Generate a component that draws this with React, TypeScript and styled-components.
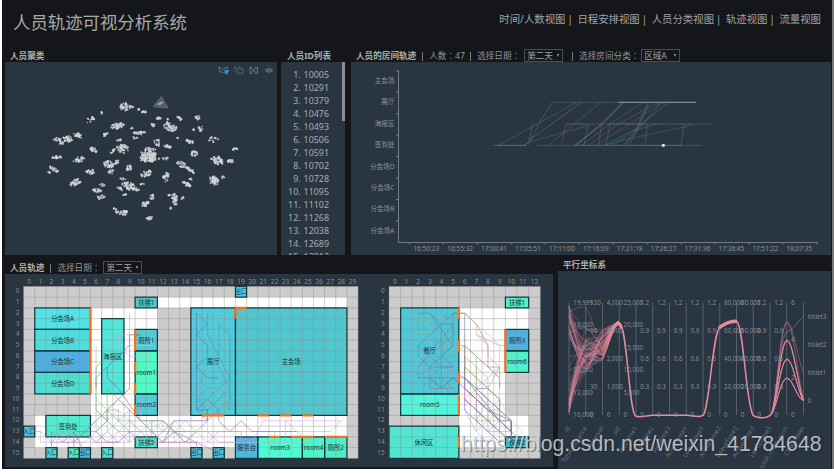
import React from "react";
import styled, { createGlobalStyle } from "styled-components";

const GlobalStyle = createGlobalStyle`
  html, body { margin: 0; padding: 0; background: #fff; overflow: hidden; }
  * { box-sizing: border-box; }
  body, svg text { font-family: "Noto Sans", "Noto Sans CJK SC", sans-serif; }
`;

const Page = styled.div`
  position: relative;
  width: 834px;
  height: 469px;
  padding-left: 2px;
  display: flex;
  background: #fff;
`;
const Shell = styled.main`
  width: 830px;
  height: 469px;
  background: #14161a;
  display: flex;
  flex-direction: column;
  overflow: hidden;
`;
const PageScroll = styled.div`
  width: 2px;
  background: #77797b;
`;
const Header = styled.header`
  height: 48px;
  display: flex;
  justify-content: space-between;
  align-items: flex-start;
  padding: 0 11px 0 11px;
`;
const Title = styled.h1`
  margin: 9px 0 0;
  font-size: 17.4px;
  line-height: 26px;
  font-weight: 400;
  color: #a8a9aa;
  white-space: nowrap;
`;
const Nav = styled.nav`
  margin-top: 12px;
  display: flex;
  font-size: 10.4px;
  line-height: 15px;
  color: #a2a3a4;
  white-space: nowrap;
`;
const NavItem = styled.a`
  & + & { margin-left: 4.4px; }
  &:not(:last-child)::after { content: "|"; margin-left: 1.8px; }
`;
const Row = styled.div<{ $gap: number; $h: number }>`
  display: flex;
  gap: ${(p) => p.$gap}px;
  height: ${(p) => p.$h}px;
  padding-left: 3px;
  flex: none;
`;
const Section = styled.section<{ $w: number; $ml?: number }>`
  width: ${(p) => p.$w}px;
  margin-left: ${(p) => p.$ml ?? 0}px;
  display: flex;
  flex-direction: column;
  flex-shrink: 0;
`;
const Head = styled.div<{ $h: number; $pad?: number }>`
  height: ${(p) => p.$h}px;
  padding-left: ${(p) => p.$pad ?? 5}px;
  display: flex;
  align-items: flex-end;
  flex: none;
  font-size: 8.6px;
  line-height: 12px;
  color: #939495;
  white-space: nowrap;
`;
const Footing = styled.div`
  height: 2px;
  flex: none;
`;
const HeadTitle = styled.strong`
  font-weight: 700;
  color: #aeafb0;
`;
const Bar = styled.span<{ $l: number; $r: number }>`
  width: 1px;
  height: 9px;
  margin: 0 ${(p) => p.$r}px 1px ${(p) => p.$l}px;
  background: #77797b;
`;
const Field = styled.span<{ $w: number }>`
  width: ${(p) => p.$w}px;
`;
const Colon = styled.span`
  font-family: "Noto Sans CJK TC", sans-serif;
`;
const SelectBox = styled.span`
  width: 39px;
  height: 13px;
  border: 1px solid #4a4c50;
  padding: 0 3px 0 2px;
  display: flex;
  align-items: center;
  justify-content: space-between;
  color: #a0a1a2;
  position: relative;
  z-index: 1;
`;
const Caret = styled.i`
  border: 1.5px solid transparent;
  border-top: 3px solid #a8a9aa;
  border-bottom: 0;
`;
const Panel = styled.div`
  flex: 1;
  min-height: 0;
  background: #293541;
  overflow: hidden;
  display: flex;
`;
const Chart = styled.svg`
  display: block;
  flex: none;
`;
const IdList = styled.ol`
  margin: 0;
  padding: 5.5px 0 0;
  width: 48px;
  list-style: none;
  font-size: 8.9px;
  line-height: 13.06px;
  color: #a9acaf;
`;
const IdItem = styled.li`
  display: flex;
  justify-content: flex-end;
  gap: 3px;
  white-space: nowrap;
`;
const Thumb = styled.div`
  width: 3px;
  height: 59px;
  margin-left: auto;
  background: #8b8d8f;
`;
const Watermark = styled.svg`
  position: absolute;
  left: 455px;
  top: 422px;
  pointer-events: none;
  text {
    font-family: "Liberation Sans", sans-serif;
    font-size: 21.5px;
  }
`;

function rng(seed: number) {
  let s = seed;
  return () => {
    s = (s * 1664525 + 1013904223) % 4294967296;
    return s / 4294967296;
  };
}

// Cluster centre, radii, rotation (degrees) and number of dots, in thirds of a pixel.
const clusters: number[][] = [
  [375, 320, 15, 12, 0, 30], [392, 321, 8, 3, 0, 6], [416, 328, 4, 2, 0, 3], [432, 335, 10, 3, 0, 9], [304, 338, 4, 3, 0, 3], [271, 360, 14, 8, -25, 16],
  [352, 378, 21, 9, -12, 38], [397, 385, 4, 3, 0, 3], [478, 355, 9, 5, 0, 10], [503, 358, 4, 3, 0, 3], [537, 355, 9, 5, 20, 9], [592, 353, 8, 6, 20, 9], [461, 376, 8, 4, 30, 7],
  [510, 380, 20, 13, 20, 48], [602, 386, 8, 8, 60, 9], [580, 389, 5, 2, 0, 3], [419, 399, 19, 4, 0, 20], [404, 413, 9, 2, 0, 4], [315, 404, 12, 4, -42, 11],
  [236, 406, 17, 8, 20, 19], [195, 420, 24, 12, -12, 42], [170, 418, 12, 7, 0, 7], [533, 415, 3, 2, 0, 2], [569, 424, 12, 7, 10, 15], [640, 418, 17, 8, 5, 10],
  [281, 449, 13, 6, 20, 17], [355, 422, 10, 4, -15, 6], [368, 446, 18, 13, 10, 35], [340, 453, 12, 4, -30, 7], [472, 428, 14, 10, 40, 14], [502, 439, 12, 4, 10, 14],
  [444, 464, 28, 20, -35, 85], [448, 474, 26, 12, 0, 38], [490, 475, 16, 4, 0, 7], [582, 460, 11, 8, 0, 17], [704, 447, 11, 4, 0, 10],
  [171, 472, 15, 4, 0, 16], [236, 479, 17, 7, -15, 22], [325, 493, 17, 11, 10, 36], [348, 487, 11, 4, -30, 8], [386, 503, 9, 8, 0, 19],
  [543, 493, 14, 9, 25, 20], [569, 510, 16, 6, 28, 20], [652, 481, 19, 12, 15, 42], [692, 484, 15, 4, 0, 12], [162, 508, 18, 5, 28, 16], [147, 520, 4, 4, 0, 3],
  [271, 515, 14, 7, 0, 20], [333, 516, 9, 6, -40, 7], [439, 521, 17, 8, -20, 24], [498, 531, 9, 15, 20, 24], [642, 542, 15, 12, 30, 40], [670, 532, 5, 3, 0, 4],
  [226, 547, 17, 10, -20, 32], [369, 537, 9, 3, 0, 5], [388, 558, 23, 11, 15, 48], [414, 571, 6, 3, 0, 5], [360, 565, 8, 4, 40, 6], [376, 584, 9, 2, 0, 5], [426, 552, 6, 2, 0, 4], [557, 551, 17, 5, 24, 24], [573, 537, 4, 3, 0, 3],
  [293, 573, 15, 6, 20, 18], [307, 555, 8, 4, 0, 5], [304, 591, 13, 6, -15, 12], [525, 598, 8, 18, -15, 34], [547, 594, 5, 4, 0, 4], [507, 584, 4, 3, 0, 3],
  [436, 612, 13, 7, -20, 22], [456, 591, 8, 6, -50, 9], [512, 624, 5, 2, 0, 4], [363, 637, 19, 7, 12, 20], [346, 626, 6, 3, 0, 4], [376, 635, 9, 3, 0, 8], [449, 655, 9, 4, -8, 11],
];

const dots = (() => {
  const r = rng(7);
  return clusters.flatMap(([cx, cy, rx, ry, a, n]) =>
    Array.from({ length: Math.ceil(n * 1.15) }, () => {
      const t = r() * Math.PI * 2;
      const d = Math.sqrt(r());
      const k = (a * Math.PI) / 180;
      const x = Math.cos(t) * rx * d;
      const y = Math.sin(t) * ry * d;
      return [cx + x * Math.cos(k) - y * Math.sin(k), cy + x * Math.sin(k) + y * Math.cos(k), 2.2 + r() * 1.4];
    })
  );
})();

const Scatter = () => (
  <Chart width={272} height={193} viewBox="5 62 272 193">
    <g transform="scale(.33333)" fill="#d4d6d8">
      {dots.map(([x, y, s], i) => (
        <circle key={i} cx={x} cy={y} r={s} fillOpacity={0.8} />
      ))}
      <path d="M484 289L505 324L459 320Z" fill="#4b6071" stroke="#5b7483" strokeWidth={2} />
      <path d="M472 313l8-5 10-2-5 5-9 3Z" stroke="#d98bb5" fill="#d98bb5" strokeWidth={2} />
      <g fill="none" stroke="#3a8fb8" strokeWidth={3}>
        <path d="M657 201l10 7 15-7-2 17M657 201l2 14 20 5" strokeDasharray="7 2" />
        <path d="M673 211l8 12 1-7 5-3Z" fill="#3a8fb8" />
        <path d="M757 202h-7v18h7M765 202h7v18h-7M755 206l12 11M767 206l-12 11" />
      </g>
      <g fill="none" stroke="#5a656f" strokeWidth={3}>
        <path d="M704 208v-7h6M715 201h7M704 213v4M711 206h18v14h-18z" />
        <path d="M795 211q12-12 24 0q-12 12-24 0Z" fill="#555d65" />
        <circle cx={807} cy={211} r={2.5} fill="#293541" />
      </g>
    </g>
  </Chart>
);

const ids = ["10005", "10291", "10379", "10476", "10493", "10506", "10591", "10702", "10728", "11095", "11102", "11268", "12038", "12689", "12812"];
const rooms = ["主会场", "展厅", "海报区", "签到处", "分会场D", "分会场C", "分会场B", "分会场A"];
const times = ["16:50:23", "16:55:32", "17:00:41", "17:05:51", "17:11:00", "17:16:09", "17:21:18", "17:26:27", "17:31:36", "17:36:45", "17:51:22", "18:07:35"];

const trackLines: [string, string, number][] = [
  ["M55 181L290 52M55 181L130 181", "#4f8090", 0.7],
  ["M145 181L182 106L217 52H420", "#4f8090", 0.75],
  ["M130 181Q145 176 148 165L158 117M148 165L305 52", "#77858c", 0.75],
  ["M135 180L152 170L325 121", "#65727a", 0.7],
  ["M205 181L362 52", "#507f88", 0.75],
  ["M245 181L258 117H320", "#86606c", 0.8],
  ["M285 181L370 115L432 52", "#8c8f92", 0.9],
  ["M290 181L385 96L428 52", "#75818a", 0.8],
  ["M312 181L325 117M355 181L365 117M378 181L390 117", "#7d8b93", 0.6],
  ["M305 181L390 117L490 52", "#68808a", 0.6],
  ["M325 181L415 117L535 52M345 181L450 117L545 52", "#835f6b", 0.75],
  ["M375 181L470 130L565 52M430 181L465 140L505 52", "#578693", 0.8],
  ["M435 181L545 52M448 181L480 117L505 60", "#668087", 0.7],
  ["M375 181L430 165L655 117H698", "#63717b", 0.75],
  ["M400 178L468 135L530 117M603 181L612 117M495 181L502 117", "#568490", 0.7],
  ["M40 181H140", "#6c8d98", 0.9],
  ["M168 181H290", "#7e5b68", 0.9],
  ["M285 181H500", "#6e9a97", 0.9],
  ["M500 181H605", "#6b9dae", 1],
  ["M605 181H665", "#647078", 0.9],
  ["M258 117H500", "#746b74", 0.7],
  ["M385 117H640", "#6b8c96", 0.8],
];

const RoomChart = () => (
  <Chart width={480} height={193} viewBox="351 62 480 193">
    <path
      d={`M398.5 70.5V242.5H817.5 ${rooms.map((_, i) => `M396 ${70.8 + i * 21.45}h2.5`).join("")} ${[...times, ""].map((_, i) => `M${409.4 + i * 33.97} 242v2.5`).join("")}`}
      fill="none" stroke="#727b84"
    />
    <g fill="#8b9299" fontSize={6.6}>
      {rooms.map((t, i) => (
        <text key={t} x={394.5} y={83 + i * 21.4} textAnchor="end">{t}</text>
      ))}
      {times.map((t, i) => (
        <text key={t} x={426.3 + i * 33.9} y={251} textAnchor="middle" fontSize={6.5}>{t}</text>
      ))}
    </g>
    <g transform="translate(480 85) scale(.33333)" fill="none" strokeWidth={2.4}>
      {trackLines.map(([d, c, o], i) => (
        <path key={i} d={d} stroke={c} strokeOpacity={o * 0.72} />
      ))}
      <path d="M415 52H648" stroke="#7b8a8d" strokeWidth={4} />
      <circle cx={550} cy={181} r={5} fill="#c5f2e8" />
    </g>
  </Chart>
);

type Room = [string, number, number, number, number, string];
interface MapSpec {
  x: number; cell: number; cols: number; rooms: Room[]; white: number[][]; doors: number[][];
}
const CELL_H = 10.75;
const MAP_Y = 286.4;

const floorOne: MapSpec = {
  x: 23.6, cell: 11.15, cols: 30,
  white: [[12, 1, 17, 1], [6, 2, 6, 2], [6, 4, 4, 8], [1, 12, 28, 2], [1, 14, 18, 1]],
  rooms: [
    ["分会场A", 1, 2, 5, 2, "#50e2e6"], ["分会场B", 1, 4, 5, 2, "#50dcdc"], ["分会场C", 1, 6, 5, 2, "#50aede"], ["分会场D", 1, 8, 5, 2, "#50dcd0"],
    ["海报区", 7, 3, 2, 7, "#50e6d8"], ["扶梯1", 10, 1, 2, 1, "#50c8cc"], ["厕所1", 10, 4, 2, 2, "#50ccd8"], ["room1", 10, 6, 2, 4, "#50fac4"], ["room2", 10, 10, 2, 2, "#50ccd8"],
    ["签到处", 2, 12, 4, 2, "#50ebd0"], ["入口", 0, 13, 1, 1, "#50bcd8"], ["扶梯2", 10, 14, 2, 1, "#50e6c8"],
    ["入口", 2, 15, 1, 1, "#50d4dc"], ["入口", 4, 15, 1, 1, "#50ebc4"], ["出口", 5, 15, 1, 1, "#50b8d8"], ["入口", 7, 15, 1, 1, "#50e2cc"],
    ["展厅", 15, 2, 4, 10, "#50ccdc"], ["主会场", 19, 2, 10, 10, "#50c6ce"], ["出口", 19, 0, 1, 1, "#50c8dc"],
    ["出口", 15, 15, 1, 1, "#50bcdc"], ["出口", 17, 15, 1, 1, "#50c4dc"],
    ["服务台", 19, 14, 2, 2, "#50b8e0"], ["room3", 21, 14, 4, 2, "#50fad6"], ["room4", 25, 14, 2, 2, "#50f0c8"], ["厕所2", 27, 14, 2, 2, "#50ebc8"],
  ],
  doors: [
    [6, 2, 6, 10], [10, 4, 10, 6], [10, 7, 10, 8], [10, 9, 10, 10], [10, 11, 10, 12], [19, 2, 20, 2], [19, 2, 19, 3],
    [16, 12, 18, 12], [21, 12, 22, 12], [23, 12, 24, 12], [25, 12, 26, 12], [22, 14, 23, 14], [24, 14, 26, 14], [27, 14, 29, 14],
  ],
};
const floorTwo: MapSpec = {
  x: 389, cell: 11.64, cols: 13,
  white: [[6, 2, 6, 2], [6, 4, 4, 11], [10, 12, 2, 3]],
  rooms: [
    ["餐厅", 1, 2, 5, 8, "#50c8d8"], ["room5", 1, 10, 5, 2, "#50f5dc"], ["休闲区", 0, 13, 6, 3, "#50e6d2"], ["扶梯1", 10, 1, 2, 1, "#50f0c8"],
    ["厕所3", 10, 4, 2, 2, "#50b0de"], ["room6", 10, 6, 2, 2, "#50f0c8"], ["扶梯2", 10, 14, 2, 1, "#3fb8cc"],
  ],
  doors: [[6, 2, 6, 3], [6, 5, 6, 6], [6, 8, 6, 9], [6, 10, 6, 12], [6, 14, 6, 15], [10, 4, 10, 8]],
};

// Walks through cell centres; each entry is a colour followed by column,row pairs.
const walksOne: [string, string][] = [
  ["#c77be0", "0,13 1,13 2,14 3,13 4,14 5,13 6,14 8,14 9,13 10,14 12,14 13,13 14,14 15,13 16,12 16,11"],
  ["#6a5ab8", "6,9 6,8 7,7 9,5 9,4"], ["#6a5ab8", "7,7 7,8 8,9 10,12 11,13 12,14 13,12 16,12 16,11 15,11 15,2"],
  ["#555560", "4,14 5,13 6,12 8,10 9,9 9,4 10,4"], ["#555560", "8,10 10,12 12,12 13,13 15,13"],
  ["#e49ae8", "9,2 9,4 8,4 8,5 9,6 11,6"], ["#e49ae8", "9,4 9,9 10,10 10,12 12,14 20,14 21,12 28,12 27,13 22,13"],
  ["#8fbf8f", "6,5 6,13 7,14 8,13 9,14"], ["#8fbf8f", "7,11 7,13 8,12 10,12 11,13 12,12 14,14 15,13 16,13"],
  ["#9fb8e4", "1,13 1,14 5,14 6,13 7,12 8,11 10,13"], ["#9fb8e4", "4,14 7,11 8,12 9,13 8,14 7,13 6,14"],
  ["#a5688a", "2,15 2,13 3,14 4,13 5,15"], ["#a5688a", "4,15 4,13 6,13 7,14 8,14"], ["#a5688a", "15,15 15,14 11,14 11,12"],
  ["#80a470", "7,6 6,7 6,11 8,13 10,13 11,14 13,12"], ["#80a470", "8,10 7,9 7,12 6,13"], ["#bba6cc", "12,14 13,13 14,12 15,13 14,14 13,13 12,12"],
  ["#bba6cc", "5,13 6,14 7,13 8,14 9,13 10,14 11,13 12,14 13,13 14,14"], ["#9a7ac0", "10,13 13,13 15,14 17,15"], ["#84b890", "16,14 17,13 22,13 22,14 21,14"],
  ["#896a7e", "17,11 17,12 18,13 19,12 20,13 24,13"], ["#9bd0a0", "23,14 23,12 24,13 25,14 20,14"],
  ["#5a7aa0", "15,2 16,3 15,4 16,5 16,6 15,7 16,8 17,8"], ["#50b890", "16,4 18,6 18,10 17,11 16,10 15,10"], ["#5a90a8", "17,3 18,4 18,11"],
  ["#9a9b78", "15,6 16,7 15,9 17,11 18,10 17,9 16,9"], ["#9a9b78", "15,10 17,8 15,8 18,11"], ["#9070b0", "15,11 16,12 17,11 16,10 15,11"],
  ["#4d9ba0", "16,2 16,4 18,8 15,11"], ["#718f9c", "15,10 16,11 18,9 17,7 17,3"], ["#b49cd8", "16,13 17,14 19,14 19,13 14,13"], ["#d9b0d0", "8,5 11,5 11,4"],
  ["#a8c4a0", "6,13 7,12 8,13 9,12 10,13 11,12 12,13 13,12 14,13"], ["#7fa87c", "6,11 7,12 7,11 8,11 8,12 9,11 9,14"], ["#c49ad0", "2,13 4,13 4,14 3,14 3,13 2,14 9,14 10,13"],
  ["#a9b8a0", "6,10 7,11 9,13 12,13 12,12 13,13 13,14 14,13 18,13"], ["#b8c8e4", "16,12 16,14 15,13 14,14"],
];
const walksTwo: [string, string][] = [
  ["#94a860", "2,2 2,4 3,4 5,6 6,5 9,8"], ["#b49470", "2,2 4,4 5,5 6,5 9,8 9,9"], ["#6c78a8", "2,2 3,2 4,3 5,2 6,2 6,8"],
  ["#776a9c", "2,8 5,8 6,8 7,9 8,9 9,10 9,12"], ["#64528c", "3,8 4,9 5,8 6,9 8,11 10,12 10,13"], ["#6c78a8", "2,5 4,7 5,7 4,6 5,5 5,3 4,3 4,9"],
  ["#6c78a8", "3,2 5,5 3,7 2,6 2,5 4,3"], ["#a87090", "2,7 5,4 5,2 6,2 7,3 8,5 8,7 9,7 9,9"], ["#dc96b4", "6,2 7,3 7,4 8,5 8,6 9,7 6,10"],
  ["#a8cca4", "6,2 9,5 9,13 7,11"], ["#648c60", "6,6 6,8 9,11 10,12 10,14"], ["#648c60", "6,5 6,9 7,10 10,13"], ["#648c60", "6,7 9,10 9,12 11,14"],
  ["#5d7060", "6,8 6,9 10,13"], ["#56506c", "6,8 9,12 10,12 10,14 6,10"], ["#c88cd0", "6,9 6,11 8,13 9,14"], ["#c88cd0", "8,9 8,13 10,13 9,12 8,13 7,12 7,10"],
  ["#9468b8", "6,10 10,14 10,12 7,9"], ["#9cc48c", "7,7 7,13 8,12 9,11 8,10 7,12 9,14"], ["#a4b4e0", "6,11 7,13 8,14 9,13 9,11"],
  ["#c49c9c", "7,4 9,5 10,5"], ["#cf9a8c", "9,7 8,9 6,7 6,4"], ["#a87090", "2,8 3,7 5,9 3,9 3,7 5,7"], ["#7c84b4", "4,2 5,3 2,7 2,8"],
  ["#b8dab0", "9,10 10,12 11,13 10,14 9,13"], ["#b278ce", "3,9 3,8 4,7 6,8 6,11 9,14"], ["#78a0b0", "3,3 5,3 4,5 3,6 5,6 5,8"],
  ["#c884c8", "6,10 8,12 8,11 9,10 9,11 8,11 8,10 7,9 7,11 9,13"], ["#8cb47c", "6,6 8,8 8,9 9,10 9,14"], ["#8cb47c", "7,6 7,9 9,11 9,12 7,12"],
];

function FloorMap({ spec, walks }: { spec: MapSpec; walks: [string, string][] }) {
  const { x, cell, cols } = spec;
  const px = (c: number) => x + c * cell;
  const py = (r: number) => MAP_Y + r * CELL_H;
  const right = px(cols);
  const bottom = py(16);
  const grid = [
    ...Array.from({ length: cols + 1 }, (_, i) => `M${px(i)} ${MAP_Y}V${bottom}`),
    ...Array.from({ length: 17 }, (_, i) => `M${x} ${py(i)}H${right}`),
  ].join("");
  return (
    <g>
      <rect x={x} y={MAP_Y} width={right - x} height={bottom - MAP_Y} fill="#cccccc" />
      {spec.white.map(([c, r, w, h], i) => (
        <rect key={i} x={px(c)} y={py(r)} width={w * cell} height={h * CELL_H} fill="#fff" />
      ))}
      {spec.rooms.map(([, c, r, w, h, f], i) => (
        <rect key={i} x={px(c)} y={py(r)} width={w * cell} height={h * CELL_H} fill={f} />
      ))}
      <path d={grid} stroke="#8c8c8c" strokeOpacity={0.55} strokeWidth={0.75} fill="none" />
      {spec.rooms.map(([, c, r, w, h], i) => (
        <rect key={i} x={px(c)} y={py(r)} width={w * cell} height={h * CELL_H} fill="none" stroke="#12383c" strokeWidth={1.2} />
      ))}
      {walks.map(([color, pts], i) => (
        <polyline
          key={i}
          points={pts.split(" ").map((p) => { const [c, r] = p.split(",").map(Number); return `${px(c + 0.5)},${py(r + 0.5)}`; }).join(" ")}
          fill="none" stroke={color} strokeWidth={0.75} strokeOpacity={0.75}
        />
      ))}
      {spec.doors.map(([a, b, c, d], i) => (
        <path key={i} d={`M${px(a)} ${py(b)}L${px(c)} ${py(d)}`} stroke="#f8701c" strokeWidth={2.2} />
      ))}
      <g fill="#17363c" fontSize={6.3} textAnchor="middle">
        {spec.rooms.map(([t, c, r, w, h], i) => (
          <text key={i} x={px(c + w / 2)} y={py(r + h / 2) + 2.4}>{t}</text>
        ))}
      </g>
      <g fill="#888f95" fontSize={6.5}>
        {Array.from({ length: cols }, (_, i) => (
          <text key={i} x={px(i + 0.5)} y={284.4} textAnchor="middle">{i}</text>
        ))}
        {Array.from({ length: 16 }, (_, i) => (
          <text key={i} x={x - 4.2} y={py(i + 0.5) + 1.6} textAnchor="end">{i}</text>
        ))}
      </g>
    </g>
  );
}

const axisX = Array.from({ length: 15 }, (_, i) => 45 + i * 50.25);
const fifths = (v: string[]) => v.map((t, i): [string, number] => [t, 143 + i * 84]);
const sixths = (v: string[]) => v.map((t, i): [string, number] => [t, 143 + i * 67.2]);
const unit = fifths(["1.2", "0.9", "0.6", "0.3", "0"]);
const big = fifths(["80,000", "60,000", "40,000", "20,000", "0"]);
const axisLabels: [string, number][][] = [
  sixths(["19,999", "18,000", "16,000", "14,000", "12,000", "10,000"]),
  fifths(["120", "90", "60", "30", "0"]),
  fifths(["4,000", "3,000", "2,000", "1,000", "0"]),
  sixths(["25,000", "20,000", "15,000", "10,000", "5,000", "0"]),
  unit, unit, unit, unit, unit, big, big, unit, unit,
  [["6", 143], ["4", 255], ["2", 367], ["0", 479]],
  [["toilet3", 186], ["toilet2", 268], ["toilet1", 352], ["0", 436]],
];
const axisNames = ["id", "Total_distance", "interval", "sid", "stoptime1", "stoptime2", "stoptime3", "ArriveTime1", "LeaveTime1", "ArriveTime2", "LeaveTime2", "ArriveTime3", "LeaveTime3", "total_room_num", "Checktoilet"];

const fan = (() => {
  const r = rng(23);
  return Array.from({ length: 54 }, (_, i) => {
    const a = i % 3 === 0 ? 430 + r() * 48 : i % 3 === 1 ? 150 + r() * 90 : 160 + r() * 300;
    const b = i === 4 ? 160 : i % 2 ? 300 + r() * 50 : 210 + r() * 120;
    const c = 218 + r() * 100 + (i % 9 === 0 ? 25 : 0);
    const e = 198 + r() * 12;
    const m = (c - a) * 0.1;
    return `M45 ${a}C56 ${a + (b - a) * 0.38} 80 ${b - m} 95 ${b}C110 ${b + m} 130 ${c + (b - c) * 0.25} 145 ${c}C160 ${c - (c - e) * 0.25} 178 ${e + 4} 195 ${e}`;
  });
})();
const bundle = "C220 203 224 478 246 484C262 489 280 481 296 481H397C420 481 432 490 447 481C465 470 476 235 497 217C514 204 530 198 547 199C568 200 577 460 598 482C612 491 634 491 649 481";
const tails: [number, number, number][] = [[200, 352, 0.4], [230, 186, 0.4], [255, 436, 0.9], [258, 436, 0.9], [312, 436, 0.9], [314, 436, 0.9], [369, 436, 0.9], [371, 436, 0.8], [204, 436, 0.4]];

const Parallel = () => (
  <Chart width={273} height={198} viewBox="558 271 273 198">
    <g transform="translate(554 255) scale(.33333)">
      <path d={axisX.map((x) => `M${x} 143V480`).join("")} stroke="#56616c" strokeWidth={3} />
      <g fill="none" stroke="#e98ba0" strokeWidth={2.3}>
        {fan.map((d, i) => <path key={i} d={d} strokeOpacity={0.38} />)}
        <path d={`M195 203${bundle}`} strokeWidth={4.5} />
        <path d="M495 219C514 204 530 197 549 199" strokeWidth={10} />
        <path d="M187 204Q196 198 203 222" strokeWidth={7} />
        {tails.map(([y, end, o], i) => (
          <path key={i} strokeOpacity={o} strokeWidth={3} d={`M649 481C667 467 678 ${y} 699 ${y}C716 ${y} 730 ${(y + end) / 2 + (end > y ? 30 : -10)} 748 ${end}`} />
        ))}
      </g>
      <g fill="#939ba2" fillOpacity={0.9} fontSize={18.8}>
        {axisLabels.flatMap((set, a) =>
          set.map(([t, y]) => <text key={`${a}-${t}`} x={axisX[a] + 13} y={y + 7}>{t}</text>)
        )}
        {axisNames.map((t, i) => (
          <text key={t} textAnchor="end" fillOpacity={0.65} transform={`translate(${axisX[i] + 4} 519) rotate(-58)`}>{t}</text>
        ))}
      </g>
    </g>
  </Chart>
);

const Select = ({ value }: { value: string }) => (
  <SelectBox>{value}<Caret /></SelectBox>
);
const Label = ({ w, name, value }: { w: number; name: string; value?: string }) => (
  <Field $w={w}>{name}<Colon>：</Colon>{value}</Field>
);

export default function App() {
  return (
    <Page>
      <GlobalStyle />
      <Shell>
        <Header>
          <Title>人员轨迹可视分析系统</Title>
          <Nav>
            {["时间/人数视图", "日程安排视图", "人员分类视图", "轨迹视图", "流量视图"].map((t) => <NavItem key={t}>{t}</NavItem>)}
          </Nav>
        </Header>
        <Row $gap={4} $h={207}>
          <Section $w={272}>
            <Head $h={14}><HeadTitle>人员聚类</HeadTitle></Head>
            <Panel><Scatter /></Panel>
          </Section>
          <Section $w={64}>
            <Head $h={14} $pad={6}><HeadTitle>人员ID列表</HeadTitle></Head>
            <Panel>
              <IdList>
                {ids.map((id, i) => <IdItem key={id}><span>{i + 1}.</span><span>{id}</span></IdItem>)}
              </IdList>
              <Thumb />
            </Panel>
          </Section>
          <Section $w={480} $ml={2}>
            <Head $h={14}>
              <HeadTitle>人员的房间轨迹</HeadTitle>
              <Bar $l={6} $r={6} /><Label w={36} name="人数" value="47" />
              <Bar $l={5} $r={6} /><Label w={47} name="选择日期" />
              <Select value="第二天" />
              <Bar $l={9} $r={6} /><Label w={62} name="选择房间分类" />
              <Select value="区域A" />
            </Head>
            <Panel><RoomChart /></Panel>
          </Section>
        </Row>
        <Row $gap={5} $h={214}>
          <Section $w={548}>
            <Head $h={19}>
              <HeadTitle>人员轨迹</HeadTitle>
              <Bar $l={6} $r={6} /><Label w={46} name="选择日期" />
              <Select value="第二天" />
            </Head>
            <Panel>
              <Chart width={548} height={193} viewBox="5 274 548 193">
                <FloorMap spec={floorOne} walks={walksOne} />
                <FloorMap spec={floorTwo} walks={walksTwo} />
              </Chart>
            </Panel>
            <Footing />
          </Section>
          <Section $w={273}>
            <Head $h={16}><HeadTitle>平行坐标系</HeadTitle></Head>
            <Panel><Parallel /></Panel>
          </Section>
        </Row>
      </Shell>
      <PageScroll />
      <Watermark width={379} height={40}>
        <text x={6.5} y={30} textLength={361} lengthAdjust="spacingAndGlyphs" fill="#101418" fillOpacity={0.45}>https://blog.csdn.net/weixin_41784648</text>
        <text x={5.5} y={29} textLength={361} lengthAdjust="spacingAndGlyphs" fill="#dfe2e4" fillOpacity={0.78}>https://blog.csdn.net/weixin_41784648</text>
      </Watermark>
    </Page>
  );
}
